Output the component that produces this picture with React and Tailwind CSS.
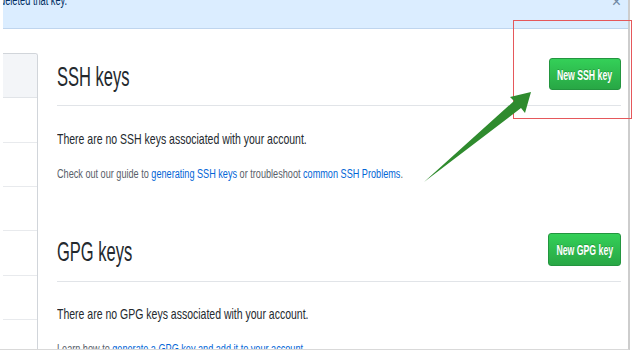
import React from "react"

const sideRows = [
  "h-[44px] bg-[#f3f5f8] border-b border-[#e1e4e8]",
  "h-[45px] border-b border-[#e8eaed]",
  "h-[44px] border-b border-[#e8eaed]",
  "h-[44px] border-b border-[#e8eaed]",
  "h-[45px] border-b border-[#e8eaed]",
  "h-[44px] border-b border-[#e8eaed]",
  "h-[44px]",
]

function GreenButton({ children, className }) {
  return (
    <button
      className={`${className} shrink-0 rounded-[3px] border border-[#23953f] bg-linear-to-b from-[#34d058] to-[#28a745] flex items-center justify-center text-white font-bold text-[15px] leading-none [text-shadow:0_-1px_0_rgba(0,0,0,0.2)]`}
    >
      <span className="inline-block whitespace-nowrap scale-x-[0.58]">{children}</span>
    </button>
  )
}

export default function App() {
  return (
    <div className="relative w-[632px] h-[351px] overflow-hidden bg-white font-['Liberation_Sans',Arial,sans-serif]">
      <div className="w-[630px] h-[350px] overflow-hidden border-r-2 border-b border-r-[#cdcdcd] border-b-[#d9d9d9]">
        {/* flash banner */}
        <div className="ml-[3px] h-[29px] bg-[#dbedff] border-b border-[#bfd5ee] flex justify-between overflow-hidden">
          <span className="-ml-[3px] -mt-[10px] text-[14px] leading-[20px] text-[#032f62] inline-block origin-left scale-x-[0.66] whitespace-nowrap">
            deleted that key.
          </span>
          <span className="mr-[7px] -mt-[8px] text-[16px] leading-[20px] text-[#6f86a3]">×</span>
        </div>

        <div className="flex pl-[3px]">
          {/* side menu */}
          <div className="w-[35px] shrink-0 mt-[24px] border-t border-r border-[#d1d5da] rounded-tr-[3px] overflow-hidden">
            {sideRows.map((c, i) => (
              <div key={i} className={c} />
            ))}
          </div>

          <main className="flex-1 pl-[19px] pr-[7px]">
            <section>
              <div className="mt-[29px] h-[48px] flex items-start justify-between border-b border-[#e1e4e8]">
                <h2 className="mt-[3px] text-[28px] leading-[32px] text-[#24292e] inline-block origin-left scale-x-[0.59] whitespace-nowrap">
                  SSH keys
                </h2>
                <GreenButton className="w-[72px] h-[32px]">New SSH key</GreenButton>
              </div>
              <p className="mt-[23px] text-[15px] leading-[20px] text-[#24292e] origin-left scale-x-[0.7] whitespace-nowrap">
                There are no SSH keys associated with your account.
              </p>
              <p className="mt-[16px] text-[12.5px] leading-[18px] text-[#586069] origin-left scale-x-[0.73] whitespace-nowrap">
                Check out our guide to <a className="text-[#0366d6]">generating SSH keys</a> or troubleshoot{" "}
                <a className="text-[#0366d6]">common SSH Problems</a>.
              </p>
            </section>

            <section>
              <div className="mt-[50px] h-[49px] flex items-start justify-between border-b border-[#e1e4e8]">
                <h2 className="mt-[3px] text-[28px] leading-[32px] text-[#24292e] inline-block origin-left scale-x-[0.59] whitespace-nowrap">
                  GPG keys
                </h2>
                <GreenButton className="w-[73px] h-[33px]">New GPG key</GreenButton>
              </div>
              <p className="mt-[22px] text-[15px] leading-[20px] text-[#24292e] origin-left scale-x-[0.7] whitespace-nowrap">
                There are no GPG keys associated with your account.
              </p>
              <p className="mt-[16px] text-[12.5px] leading-[18px] text-[#586069] origin-left scale-x-[0.73] whitespace-nowrap">
                Learn how to <a className="text-[#0366d6]">generate a GPG key and add it to your account</a>.
              </p>
            </section>
          </main>
        </div>
      </div>

      {/* annotation overlay */}
      <div className="absolute left-[513px] top-[20px] w-[119px] h-[99px] border border-[#e5585b]" />
      <svg className="absolute left-0 top-0 pointer-events-none" width="632" height="351" viewBox="0 0 632 351">
        <polygon points="424,182 514,101 510,97 531,92 525,113 521,108" fill="#2f8b2e" />
      </svg>
    </div>
  )
}
